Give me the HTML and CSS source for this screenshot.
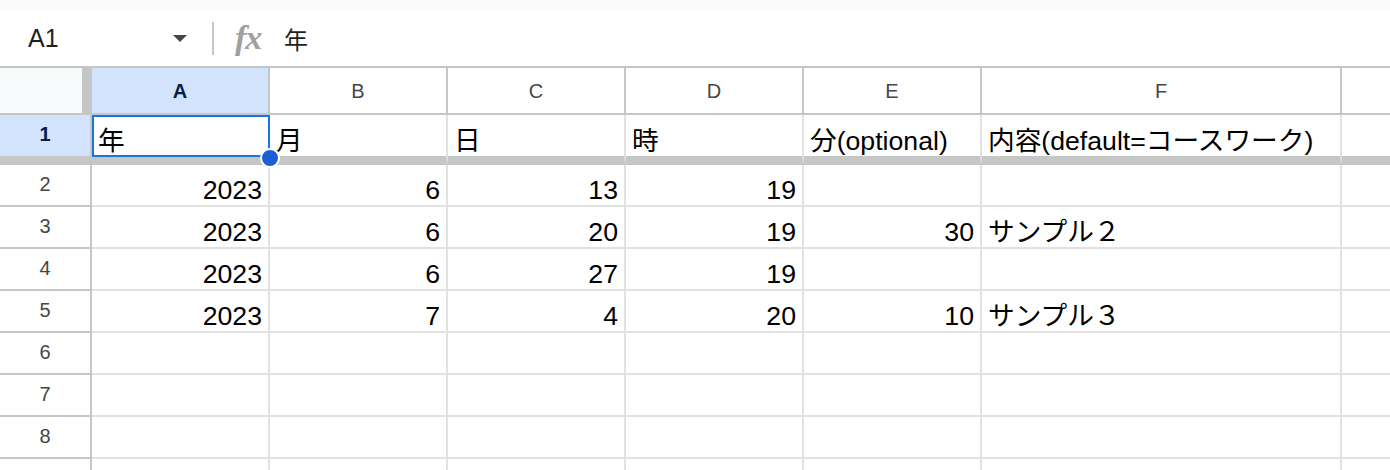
FILE: index.html
```html
<!DOCTYPE html>
<html lang="ja">
<head>
<meta charset="utf-8">
<title>Sheet</title>
<link rel="stylesheet" href="styles.css">
</head>
<body>
<div class="topstrip"></div>
<div class="fbar">
  <div class="namebox"><span class="ref">A1</span><span class="caret"></span></div>
  <div class="sep"></div>
  <div class="fx">fx</div>
  <div class="fval">年</div>
</div>
<div class="grid">
  <div class="corner"></div>
  <div class="ch sel">A</div>
  <div class="ch">B</div>
  <div class="ch">C</div>
  <div class="ch">D</div>
  <div class="ch">E</div>
  <div class="ch">F</div>
  <div class="ch last"></div>

  <div class="rh sel frz">1</div>
  <div class="c frz">年</div>
  <div class="c frz">月</div>
  <div class="c frz">日</div>
  <div class="c frz">時</div>
  <div class="c frz">分(optional)</div>
  <div class="c frz">内容(default=コースワーク)</div>
  <div class="c frz last"></div>

  <div class="rh">2</div>
  <div class="c n">2023</div><div class="c n">6</div><div class="c n">13</div><div class="c n">19</div><div class="c n"></div><div class="c"></div><div class="c last"></div>

  <div class="rh">3</div>
  <div class="c n">2023</div><div class="c n">6</div><div class="c n">20</div><div class="c n">19</div><div class="c n">30</div><div class="c">サンプル２</div><div class="c last"></div>

  <div class="rh">4</div>
  <div class="c n">2023</div><div class="c n">6</div><div class="c n">27</div><div class="c n">19</div><div class="c n"></div><div class="c"></div><div class="c last"></div>

  <div class="rh">5</div>
  <div class="c n">2023</div><div class="c n">7</div><div class="c n">4</div><div class="c n">20</div><div class="c n">10</div><div class="c">サンプル３</div><div class="c last"></div>

  <div class="rh">6</div>
  <div class="c"></div><div class="c"></div><div class="c"></div><div class="c"></div><div class="c"></div><div class="c"></div><div class="c last"></div>

  <div class="rh">7</div>
  <div class="c"></div><div class="c"></div><div class="c"></div><div class="c"></div><div class="c"></div><div class="c"></div><div class="c last"></div>

  <div class="rh">8</div>
  <div class="c"></div><div class="c"></div><div class="c"></div><div class="c"></div><div class="c"></div><div class="c"></div><div class="c last"></div>

  <div class="rh"></div>
  <div class="c"></div><div class="c"></div><div class="c"></div><div class="c"></div><div class="c"></div><div class="c"></div><div class="c last"></div>

  <div class="selbox"></div>
  <div class="handle"></div>
</div>
</body>
</html>
```
FILE: styles.css
```css
html, body {
  margin: 0;
  padding: 0;
}
body {
  width: 1390px;
  height: 470px;
  overflow: hidden;
  background: #ffffff;
  font-family: "Liberation Sans", "Noto Sans CJK JP", sans-serif;
  color: #000;
}
.topstrip {
  height: 10px;
  background: #f9fbfd;
}
.fbar {
  height: 56px;
  border-bottom: 2px solid #c4c7c5;
  display: flex;
  align-items: center;
  background: #fff;
}
.namebox {
  width: 200px;
  box-sizing: border-box;
  padding: 0 13px 0 28px;
  display: flex;
  align-items: center;
}
.ref {
  font-size: 25px;
  color: #1f1f1f;
}
.caret {
  margin-left: auto;
  width: 0;
  height: 0;
  border-left: 7px solid transparent;
  border-right: 7px solid transparent;
  border-top: 7px solid #444746;
}
.sep {
  width: 2px;
  height: 33px;
  margin-left: 12px;
  background: #c7c7c7;
}
.fx {
  margin-left: 21px;
  font-family: "Liberation Serif", "DejaVu Serif", serif;
  font-style: italic;
  font-weight: bold;
  font-size: 34px;
  color: #a0a0a0;
  letter-spacing: -1px;
  width: 28px;
  line-height: 30px;
}
.fval {
  margin-left: 21px;
  font-size: 24px;
  color: #1f1f1f;
}
.grid {
  position: relative;
  display: grid;
  grid-template-columns: 92px 178px 178px 178px 178px 178px 360px 1fr;
  grid-template-rows: 47px 50px repeat(8, 42px);
}
.grid > div {
  box-sizing: border-box;
}
.corner {
  background: #f8f9fa;
  border-right: 10px solid #c4c7c5;
  border-bottom: 2px solid #c4c7c5;
}
.ch {
  border-right: 2px solid #c4c7c5;
  border-bottom: 2px solid #c4c7c5;
  display: flex;
  align-items: center;
  justify-content: center;
  font-size: 20px;
  color: #444746;
  padding-top: 1px;
}
.ch.last, .c.last {
  border-right: none;
}
.rh {
  border-right: 2px solid #c4c7c5;
  border-bottom: 2px solid #c4c7c5;
  display: flex;
  align-items: center;
  justify-content: center;
  font-size: 20px;
  color: #444746;
  padding-bottom: 2px;
}
.sel {
  background: #d3e3fd;
  color: #041e49;
  font-weight: bold;
}
.c {
  border-right: 2px solid #e1e1e1;
  border-bottom: 2px solid #e1e1e1;
  display: flex;
  align-items: flex-end;
  padding: 0 6px 0 6px;
  font-size: 26.67px;
  line-height: 30px;
  white-space: nowrap;
  overflow: hidden;
}
.c.n {
  justify-content: flex-end;
}
.frz {
  border-bottom: 9px solid #c4c7c5;
}
.selbox {
  position: absolute;
  left: 92px;
  top: 47px;
  width: 178px;
  height: 42px;
  box-sizing: border-box;
  border: 2.5px solid #1a73e8;
  pointer-events: none;
}
.handle {
  position: absolute;
  left: 260px;
  top: 80px;
  width: 20px;
  height: 20px;
  box-sizing: border-box;
  border-radius: 50%;
  background: #1b5fd6;
  border: 2px solid #ffffff;
}
```
